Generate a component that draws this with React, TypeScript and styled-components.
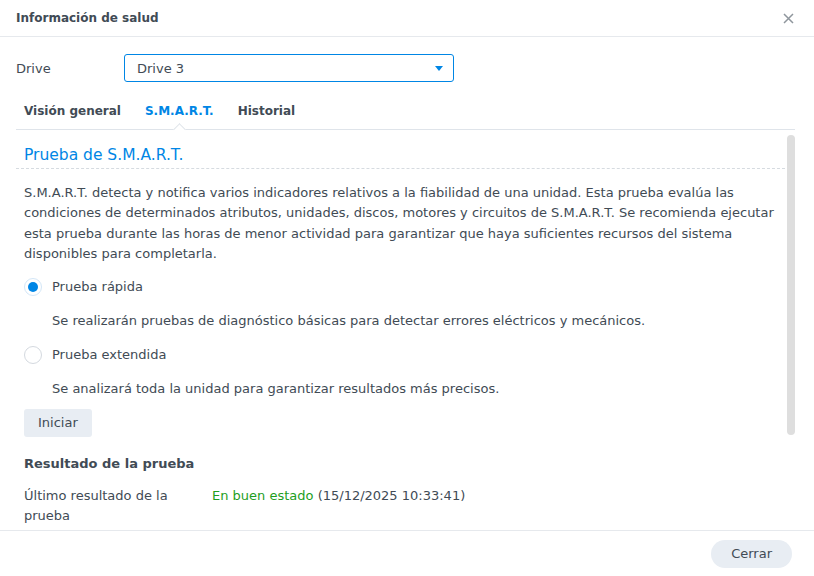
import React from "react";
import styled, { createGlobalStyle } from "styled-components";

const GlobalStyle = createGlobalStyle`
  html, body { margin: 0; padding: 0; background: #fff; }
  body { font-family: "DejaVu Sans", Verdana, sans-serif; color: #414b55; }
  * { box-sizing: border-box; }
`;

const Dialog = styled.div`
  width: 814px;
  height: 576px;
  display: flex;
  flex-direction: column;
  background: #fff;
  overflow: hidden;
`;

const Header = styled.div`
  height: 37px;
  flex: none;
  display: flex;
  align-items: center;
  justify-content: space-between;
  padding: 0 20px 0 16px;
  border-bottom: 1px solid #e6e9ed;
`;

const Title = styled.div`
  font-size: 12px;
  font-weight: bold;
  color: #414b55;
`;

const CloseBtn = styled.button`
  border: 0;
  background: none;
  padding: 0;
  width: 12px;
  height: 12px;
  display: flex;
  align-items: center;
  justify-content: center;
`;

const Body = styled.div`
  flex: 1;
  min-height: 0;
  display: flex;
  flex-direction: column;
  padding: 17px 19px 0 16px;
`;

const FieldRow = styled.div`
  display: flex;
  align-items: center;
  height: 28px;
`;

const FieldLabel = styled.div`
  width: 108px;
  font-size: 13px;
`;

const Select = styled.div`
  width: 330px;
  height: 28px;
  border: 1px solid #0086e5;
  border-radius: 3px;
  display: flex;
  align-items: center;
  justify-content: space-between;
  padding: 0 10px 0 12px;
  font-size: 13px;
`;

const Caret = styled.span`
  width: 0;
  height: 0;
  border-left: 4.5px solid transparent;
  border-right: 4.5px solid transparent;
  border-top: 5px solid #0086e5;
`;

const TabBar = styled.div`
  margin-top: 14px;
  display: flex;
  gap: 24px;
  padding: 0 8px;
  height: 34px;
  border-bottom: 1px solid #dfe4ea;
`;

const Tab = styled.div<{ $active?: boolean }>`
  position: relative;
  font-size: 12px;
  font-weight: bold;
  display: flex;
  align-items: center;
  height: 30px;
  color: ${(p) => (p.$active ? "#0086e5" : "#414b55")};
  &::after {
    content: "";
    display: ${(p) => (p.$active ? "block" : "none")};
    position: absolute;
    left: 50%;
    bottom: -8px;
    width: 8px;
    height: 8px;
    margin-left: -4px;
    background: #fff;
    border-left: 1px solid #dfe4ea;
    border-top: 1px solid #dfe4ea;
    transform: rotate(45deg);
  }
`;

const ScrollArea = styled.div`
  position: relative;
  flex: 1;
  min-height: 0;
  overflow: hidden;
`;

const Thumb = styled.div`
  position: absolute;
  right: 0;
  top: 5px;
  width: 8px;
  height: 300px;
  border-radius: 4px;
  background: #dedede;
`;

const SectionTitle = styled.div`
  margin-top: 16px;
  padding: 0 8px 4px;
  font-size: 15.5px;
  color: #0086e5;
  border-bottom: 1px dashed #d6dbe0;
`;

const Content = styled.div`
  padding: 14px 12px 0 8px;
  font-size: 13px;
  line-height: 20px;
`;

const Paragraph = styled.p`
  margin: 0;
  line-height: 20.4px;
`;

const RadioRow = styled.label<{ $mt: number }>`
  display: flex;
  align-items: center;
  gap: 10px;
  height: 20px;
  margin-top: ${(p) => p.$mt}px;
`;

const RadioCircle = styled.span<{ $checked?: boolean }>`
  width: 18px;
  height: 18px;
  border-radius: 50%;
  border: 1px solid ${(p) => (p.$checked ? "#d3e6f7" : "#d4d9df")};
  background: #fff;
  display: flex;
  align-items: center;
  justify-content: center;
  &::after {
    content: "";
    display: ${(p) => (p.$checked ? "block" : "none")};
    width: 10px;
    height: 10px;
    border-radius: 50%;
    background: #0086e5;
  }
`;

const OptionDesc = styled.div<{ $mt: number }>`
  margin-top: ${(p) => p.$mt}px;
  padding-left: 28px;
`;

const Button = styled.button<{ $pill?: boolean }>`
  border: 0;
  font-family: inherit;
  font-size: 13px;
  color: #414b55;
  background: #e8edf3;
  height: 28px;
  padding: 0 ${(p) => (p.$pill ? "20px" : "14px")};
  border-radius: ${(p) => (p.$pill ? "14px" : "3px")};
`;

const StartRow = styled.div`
  margin-top: 10px;
`;

const SubHeading = styled.div`
  margin-top: 17px;
  font-weight: bold;
`;

const ResultRow = styled.div`
  margin-top: 12px;
  display: grid;
  grid-template-columns: 188px 1fr;
  line-height: 20.5px;
`;

const Good = styled.span`
  color: #1e9e1e;
`;

const Footer = styled.div`
  height: 46px;
  flex: none;
  border-top: 1px solid #e6e9ed;
  display: flex;
  align-items: center;
  justify-content: flex-end;
  padding: 0 22px;
`;

export default function App() {
  return (
    <>
      <GlobalStyle />
      <Dialog>
        <Header>
          <Title>Información de salud</Title>
          <CloseBtn aria-label="close">
            <svg width="11" height="11" viewBox="0 0 11 11">
              <path d="M1 1 L10 10 M10 1 L1 10" stroke="#8f969d" strokeWidth="1.5" />
            </svg>
          </CloseBtn>
        </Header>
        <Body>
          <FieldRow>
            <FieldLabel>Drive</FieldLabel>
            <Select>
              <span>Drive 3</span>
              <Caret />
            </Select>
          </FieldRow>
          <TabBar>
            <Tab>Visión general</Tab>
            <Tab $active>S.M.A.R.T.</Tab>
            <Tab>Historial</Tab>
          </TabBar>
          <ScrollArea>
            <SectionTitle>Prueba de S.M.A.R.T.</SectionTitle>
            <Content>
              <Paragraph>
                S.M.A.R.T. detecta y notifica varios indicadores relativos a la fiabilidad de una unidad. Esta prueba evalúa las condiciones de determinados atributos, unidades, discos, motores y circuitos de S.M.A.R.T. Se recomienda ejecutar esta prueba durante las horas de menor actividad para garantizar que haya suficientes recursos del sistema disponibles para completarla.
              </Paragraph>
              <RadioRow $mt={12}>
                <RadioCircle $checked />
                <span>Prueba rápida</span>
              </RadioRow>
              <OptionDesc $mt={14}>
                Se realizarán pruebas de diagnóstico básicas para detectar errores eléctricos y mecánicos.
              </OptionDesc>
              <RadioRow $mt={14}>
                <RadioCircle />
                <span>Prueba extendida</span>
              </RadioRow>
              <OptionDesc $mt={14}>
                Se analizará toda la unidad para garantizar resultados más precisos.
              </OptionDesc>
              <StartRow>
                <Button>Iniciar</Button>
              </StartRow>
              <SubHeading>Resultado de la prueba</SubHeading>
              <ResultRow>
                <div>
                  Último resultado de la
                  <br />
                  prueba
                </div>
                <div>
                  <Good>En buen estado</Good> (15/12/2025 10:33:41)
                </div>
              </ResultRow>
            </Content>
            <Thumb />
          </ScrollArea>
        </Body>
        <Footer>
          <Button $pill>Cerrar</Button>
        </Footer>
      </Dialog>
    </>
  );
}
